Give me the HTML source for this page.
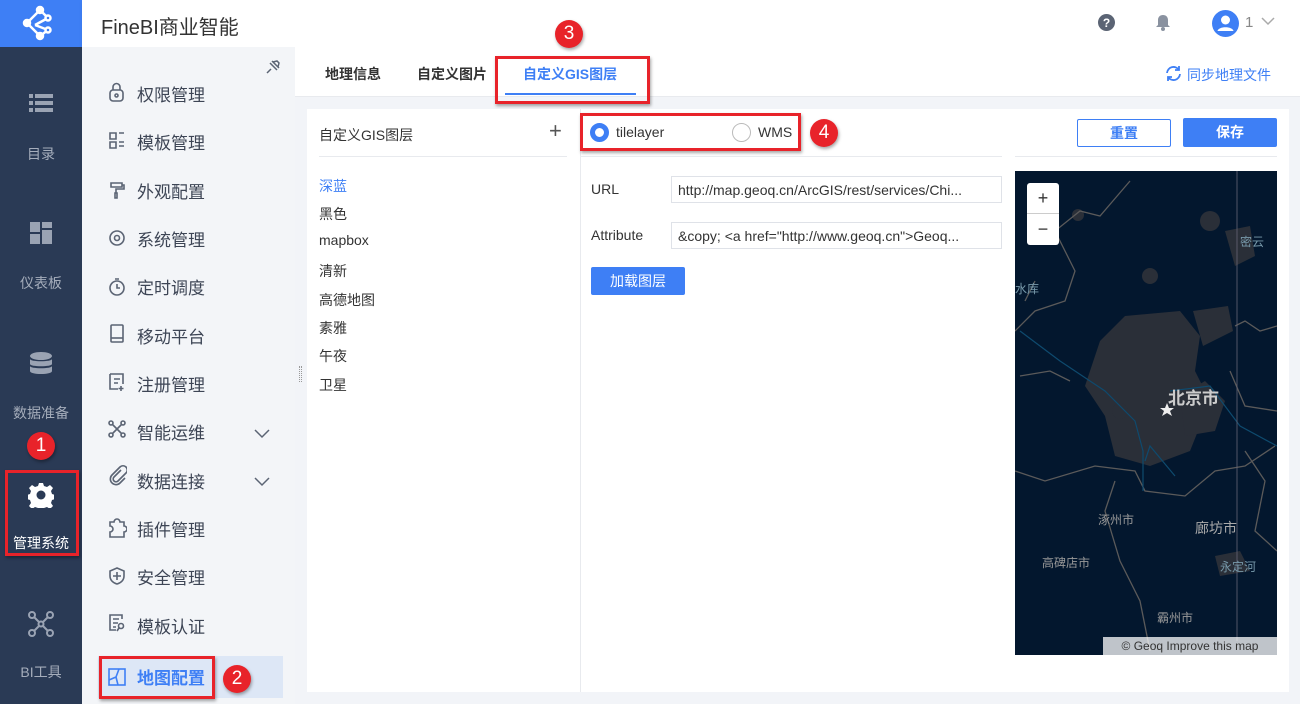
<!DOCTYPE html>
<html><head><meta charset="utf-8"><style>
*{margin:0;padding:0;box-sizing:border-box}
body{width:1300px;height:704px;overflow:hidden;font-family:"Liberation Sans","Noto Sans CJK SC",sans-serif;background:#f2f4f8;position:relative;color:#333}
.a{position:absolute}
.lb{left:0;top:0;width:82px;height:704px;background:#2a3a55}
.logo{left:0;top:0;width:82px;height:47px;background:#3e7ff5}
.lbt{width:82px;text-align:center;color:#a5adbb;font-size:14px}
.hdr{left:82px;top:0;width:1218px;height:47px;background:#fff;box-shadow:0 2px 4px rgba(0,0,0,.06)}
.side{left:82px;top:47px;width:213px;height:657px;background:#f3f5f8}
.mi{left:137px;font-size:17px;color:#3d4555}
.red{border:3px solid #e8232a;box-shadow:1px 2px 3px rgba(0,0,0,.35)}
.badge{width:28px;height:28px;border-radius:50%;background:#e8232a;color:#fff;font-size:19px;text-align:center;line-height:28px;box-shadow:1px 2px 3px rgba(0,0,0,.35)}
.tab{top:64px;font-size:14px;color:#333;font-weight:bold}
.li{left:319px;font-size:14px;color:#333}
.inp{left:671px;width:331px;height:27px;border:1px solid #dfe2e8;font-size:14px;color:#333;padding:5px 6px;white-space:nowrap;overflow:hidden}
</style></head><body>
<div class="a lb"></div>
<div class="a logo"><svg width="82" height="47"><g fill="#fff" stroke="#fff" stroke-width="2.5"><line x1="27" y1="23" x2="40" y2="10"/><line x1="27" y1="23" x2="40" y2="36"/><line x1="40" y1="10" x2="48" y2="18"/><line x1="48" y1="18" x2="35" y2="25"/><line x1="35" y1="25" x2="48" y2="30"/><line x1="48" y1="30" x2="40" y2="36"/><circle cx="40" cy="10" r="3"/><circle cx="27" cy="23" r="3"/><circle cx="40" cy="36" r="3"/><circle cx="48" cy="18" r="2.5" fill="#3e7ff5"/><circle cx="48" cy="30" r="2.5" fill="#3e7ff5"/></g></svg></div>
<svg class="a" style="left:29px;top:94px" width="24" height="18"><g fill="#9aa3b3"><rect x="0" y="0" width="4" height="4"/><rect x="6" y="0" width="18" height="4"/><rect x="0" y="7" width="4" height="4"/><rect x="6" y="7" width="18" height="4"/><rect x="0" y="14" width="4" height="4"/><rect x="6" y="14" width="18" height="4"/></g></svg>
<div class="a lbt" style="top:144px">目录</div>
<svg class="a" style="left:30px;top:222px" width="22" height="22"><g fill="#9aa3b3"><rect x="0" y="0" width="10" height="10"/><rect x="12" y="0" width="10" height="6"/><rect x="0" y="12" width="10" height="10"/><rect x="12" y="8" width="10" height="14"/></g></svg>
<div class="a lbt" style="top:273px">仪表板</div>
<svg class="a" style="left:29px;top:352px" width="24" height="24"><g fill="#9aa3b3"><ellipse cx="12" cy="4" rx="11" ry="4"/><path d="M1 7c0 3 22 3 22 0v5c0 3-22 3-22 0z"/><path d="M1 14c0 3 22 3 22 0v5c0 4-22 4-22 0z"/></g></svg>
<div class="a lbt" style="top:403px">数据准备</div>
<div class="a badge" style="left:27px;top:432px">1</div>
<div class="a red" style="left:5px;top:470px;width:74px;height:86px"></div>
<svg class="a" style="left:28px;top:482px" width="26" height="26" viewBox="0 0 26 26"><path fill="#fff" d="M11 1h4l1 3 3 1 3-2 3 3-2 3 1 3 3 1v4l-3 1-1 3 2 3-3 3-3-2-3 1-1 3h-4l-1-3-3-1-3 2-3-3 2-3-1-3-3-1v-4l3-1 1-3-2-3 3-3 3 2 3-1z"/><circle cx="13" cy="13" r="4.5" fill="#2a3a55"/></svg>
<div class="a lbt" style="top:533px;color:#fff">管理系统</div>
<svg class="a" style="left:28px;top:611px" width="26" height="26"><g stroke="#9aa3b3" stroke-width="2" fill="none"><circle cx="4" cy="4" r="3"/><circle cx="22" cy="4" r="3"/><circle cx="4" cy="22" r="3"/><circle cx="22" cy="22" r="3"/><circle cx="13" cy="13" r="2.5"/><path d="M6 6l5 5M20 6l-5 5M6 20l5-5M20 20l-5-5"/></g></svg>
<div class="a lbt" style="top:662px">BI工具</div>

<div class="a hdr"></div>
<div class="a" style="left:101px;top:11px;font-size:20px;color:#333">FineBI商业智能</div>
<svg class="a" style="left:1098px;top:14px" width="17" height="17"><circle cx="8.5" cy="8.5" r="8.5" fill="#5b6474"/><text x="8.5" y="13" font-size="12" font-weight="bold" fill="#fff" text-anchor="middle" font-family="Liberation Sans">?</text></svg>
<svg class="a" style="left:1156px;top:14px" width="14" height="17"><path d="M7 1c-3 0-5 2-5 5v5l-2 2h14l-2-2V6c0-3-2-5-5-5z" fill="#8a92a0"/><circle cx="7" cy="15" r="2" fill="#8a92a0"/></svg>
<svg class="a" style="left:1212px;top:10px" width="27" height="27"><circle cx="13.5" cy="13.5" r="13.5" fill="#3e7ff5"/><circle cx="13.5" cy="10" r="4.5" fill="#fff"/><path d="M5.5 21c1-5 15-5 16 0z" fill="#fff"/></svg>
<div class="a" style="left:1245px;top:14px;font-size:15px;color:#888">1</div>
<svg class="a" style="left:1261px;top:17px" width="14" height="9"><path d="M1 1l6 6 6-6" stroke="#aaa" fill="none" stroke-width="1.5"/></svg>

<div class="a side"></div>
<svg class="a" style="left:264px;top:58px" width="18" height="18"><g stroke="#5b6474" stroke-width="1.5" fill="none"><path d="M3 15l4-4M6 5l7 7M8 3l7 7M9 4l4-1 2 2-1 4"/></g></svg>
<div class="a mi" style="top:81px">权限管理</div>
<div class="a mi" style="top:129px">模板管理</div>
<div class="a mi" style="top:178px">外观配置</div>
<div class="a mi" style="top:226px">系统管理</div>
<div class="a mi" style="top:274px">定时调度</div>
<div class="a mi" style="top:323px">移动平台</div>
<div class="a mi" style="top:371px">注册管理</div>
<div class="a mi" style="top:419px">智能运维</div>
<div class="a mi" style="top:468px">数据连接</div>
<div class="a mi" style="top:516px">插件管理</div>
<div class="a mi" style="top:564px">安全管理</div>
<div class="a mi" style="top:613px">模板认证</div>
<svg class="a" style="left:254px;top:429px" width="16" height="10"><path d="M1 1l7 7 7-7" stroke="#5b6474" fill="none" stroke-width="1.5"/></svg>
<svg class="a" style="left:254px;top:477px" width="16" height="10"><path d="M1 1l7 7 7-7" stroke="#5b6474" fill="none" stroke-width="1.5"/></svg>
<svg class="a" style="left:107px;top:82px" width="20" height="580"><g stroke="#5b6474" stroke-width="1.6" fill="none">
<rect x="3" y="8" width="13" height="11" rx="3"/><path d="M6 8V5a3.5 3.5 0 0 1 7 0v3"/><circle cx="9.5" cy="13.5" r="1.5"/>
<path d="M3 51h6v6H3zM12 51h5M3 60h6v6H3zM12 60h5M12 64h5"/>
<path d="M4 101h11v4H4zM15 103h2v4h-8v4M8 111h2v5H8z"/>
<circle cx="10" cy="156" r="7"/><circle cx="10" cy="156" r="2.5"/>
<circle cx="10" cy="206" r="7"/><path d="M10 202v4h3M8 197h4"/>
<rect x="4" y="243" width="12" height="17" rx="1"/><path d="M4 256h12"/>
<path d="M3 292h13v10M3 292v15h8M7 297h6M7 301h4M14 304v5M11.5 306.5h5"/>
<circle cx="4" cy="341" r="2"/><circle cx="16" cy="341" r="2"/><circle cx="4" cy="353" r="2"/><circle cx="16" cy="353" r="2"/><path d="M5.5 342.5l9 9M14.5 342.5l-9 9"/>
<path d="M14 388l-7 7a2.5 2.5 0 0 0 4 4l8-8a4 4 0 0 0-6-6l-8 8a5.5 5.5 0 0 0 8 8l5-5"/>
<path d="M3 440h4a3 3 0 1 1 6 0h4v4a3 3 0 1 1 0 6v5H3v-5a3 3 0 1 0 0-6z"/>
<path d="M10 486l7 3v5c0 4-3 7-7 8-4-1-7-4-7-8v-5zM10 490v8M6 494h8"/>
<path d="M15 537v-4H3v15h6M6 537h6M6 541h5M6 545h3"/><circle cx="14" cy="544" r="2.5"/><path d="M12 546l-2 3"/>
</g></svg>
<div class="a" style="left:98px;top:656px;width:185px;height:42px;background:#dde7f6"></div>
<svg class="a" style="left:107px;top:667px" width="20" height="20"><g stroke="#3e7ff5" stroke-width="1.6" fill="none"><rect x="2" y="2" width="16" height="16"/><path d="M2 13l7-3 3-8M9 10l2 8"/></g></svg>
<div class="a" style="left:137px;top:664px;font-size:17px;color:#3e7ff5;font-weight:bold">地图配置</div>
<div class="a red" style="left:99px;top:656px;width:116px;height:43px"></div>
<div class="a badge" style="left:223px;top:665px">2</div>

<div class="a" style="left:295px;top:47px;width:1005px;height:50px;background:#fff;border-bottom:1px solid #e8eaee"></div>
<div class="a tab" style="left:325px">地理信息</div>
<div class="a tab" style="left:417px">自定义图片</div>
<div class="a tab" style="left:523px;color:#3e7ff5">自定义GIS图层</div>
<div class="a" style="left:505px;top:93px;width:131px;height:2px;background:#3e7ff5"></div>
<div class="a red" style="left:495px;top:56px;width:155px;height:48px"></div>
<div class="a badge" style="left:555px;top:20px">3</div>
<svg class="a" style="left:1165px;top:65px" width="17" height="17"><g stroke="#3e7ff5" stroke-width="1.8" fill="none"><path d="M2 8a6.5 6.5 0 0 1 12-3M15 9a6.5 6.5 0 0 1-12 3"/><path d="M14 1v4h-4M3 16v-4h4"/></g></svg>
<div class="a" style="left:1187px;top:65px;font-size:14px;color:#3e7ff5">同步地理文件</div>

<div class="a" style="left:307px;top:109px;width:982px;height:583px;background:#fff"></div>
<div class="a" style="left:580px;top:109px;width:1px;height:583px;background:#e8eaee"></div>
<div class="a" style="left:319px;top:125px;font-size:14px;color:#333">自定义GIS图层</div>
<div class="a" style="left:549px;top:118px;font-size:22px;color:#555;line-height:26px">+</div>
<div class="a" style="left:319px;top:156px;width:248px;height:1px;background:#e8eaee"></div>
<div class="a li" style="top:176px;color:#3e7ff5">深蓝</div>
<div class="a li" style="top:204px">黑色</div>
<div class="a li" style="top:232px">mapbox</div>
<div class="a li" style="top:261px">清新</div>
<div class="a li" style="top:290px">高德地图</div>
<div class="a li" style="top:318px">素雅</div>
<div class="a li" style="top:346px">午夜</div>
<div class="a li" style="top:375px">卫星</div>
<div class="a" style="left:299px;top:366px;width:3px;height:16px;border-left:1px dotted #999;border-right:1px dotted #999"></div>

<div class="a" style="left:590px;top:123px;width:19px;height:19px;border-radius:50%;border:5px solid #3e7ff5;background:#fff"></div>
<div class="a" style="left:616px;top:124px;font-size:14px;color:#333">tilelayer</div>
<div class="a" style="left:732px;top:123px;width:19px;height:19px;border-radius:50%;border:1px solid #bbb"></div>
<div class="a" style="left:758px;top:124px;font-size:14px;color:#333">WMS</div>
<div class="a red" style="left:580px;top:113px;width:221px;height:38px"></div>
<div class="a badge" style="left:810px;top:119px">4</div>
<div class="a" style="left:581px;top:156px;width:421px;height:1px;background:#e8eaee"></div>
<div class="a" style="left:1015px;top:156px;width:262px;height:1px;background:#e8eaee"></div>
<div class="a" style="left:1077px;top:119px;width:94px;height:28px;border:1px solid #3e7ff5;border-radius:2px;color:#3e7ff5;font-size:14px;text-align:center;line-height:26px;font-weight:bold">重置</div>
<div class="a" style="left:1183px;top:118px;width:94px;height:29px;background:#3e7ff5;border-radius:2px;color:#fff;font-size:14px;text-align:center;line-height:29px;font-weight:bold">保存</div>
<div class="a" style="left:591px;top:181px;font-size:14px">URL</div>
<div class="a inp" style="top:176px">http://map.geoq.cn/ArcGIS/rest/services/Chi...</div>
<div class="a" style="left:591px;top:227px;font-size:14px">Attribute</div>
<div class="a inp" style="top:222px">&amp;copy; &lt;a href="http://www.geoq.cn"&gt;Geoq...</div>
<div class="a" style="left:591px;top:267px;width:94px;height:28px;background:#3e7ff5;border-radius:2px;color:#fff;font-size:14px;text-align:center;line-height:28px">加载图层</div>

<div class="a" style="left:1015px;top:171px;width:262px;height:484px;background:#03172e;overflow:hidden">
<svg width="262" height="484"><g fill="#2a2f38"><path d="M110 145l55-5 20 25-5 35 15 30-20 50-40 15-35-10-10-40-20-30 15-45z"/><path d="M178 140l35-5 5 25-30 15z"/><path d="M165 225l25-15 20 20-10 30-30 5z"/><circle cx="135" cy="105" r="8"/><circle cx="195" cy="50" r="10"/><circle cx="105" cy="240" r="8"/><circle cx="63" cy="44" r="6"/><path d="M200 385l25-5 10 20-30 5z"/><path d="M210 60l25-5 5 30-20 10z"/></g>
<g stroke="#5b5a5a" stroke-width="1.3" fill="none"><path d="M0 160l20-20 30-10 10-30-20-40 25-20 20 5 30-35"/><path d="M20 110l-10 20M5 205l30-5 20 10"/><path d="M0 300l30 10 50-15 40 5 10 20 40 5 30-25 30-5 30-20"/><path d="M100 310l-10 30 15 50 20 40 10 50"/><path d="M220 155l10-5 15 10 17-5M215 200l15 35 32 5"/><path d="M230 280l20 30-10 50 22 20"/></g>
<g stroke="#0e4a6e" stroke-width="1.2" fill="none"><path d="M5 160l40 30 45 30 30 30 8 30v40"/><path d="M130 290l5-15 25 30M155 220l40-5 30 40 37 20"/></g>
<line x1="222" y1="0" x2="222" y2="470" stroke="#667" stroke-width="0.8"/>
<g font-family="Liberation Sans,Noto Sans CJK SC,sans-serif"><text x="153" y="233" fill="#ccc" font-size="17" font-weight="bold">北京市</text><text x="0" y="122" fill="#7799aa" font-size="12">水库</text><text x="225" y="75" fill="#7799aa" font-size="12">密云</text><text x="83" y="353" fill="#999" font-size="12">涿州市</text><text x="180" y="362" fill="#aaa" font-size="14">廊坊市</text><text x="27" y="396" fill="#999" font-size="12">高碑店市</text><text x="205" y="400" fill="#7799aa" font-size="12">永定河</text><text x="142" y="451" fill="#999" font-size="12">霸州市</text></g>
<path d="M152 232l2 5h5l-4 3 2 5-5-3-5 3 2-5-4-3h5z" fill="#eee"/>
</svg>
<div class="a" style="left:12px;top:12px;width:32px;height:62px;background:#fff;border-radius:3px;font-size:18px;color:#333;text-align:center;line-height:30px">+<div style="border-top:1px solid #ccc">−</div></div>
<div class="a" style="left:88px;top:466px;width:174px;height:18px;background:rgba(255,255,255,.75);font-size:12px;color:#333;text-align:center;line-height:18px">© Geoq Improve this map</div>
</div>
</body></html>
